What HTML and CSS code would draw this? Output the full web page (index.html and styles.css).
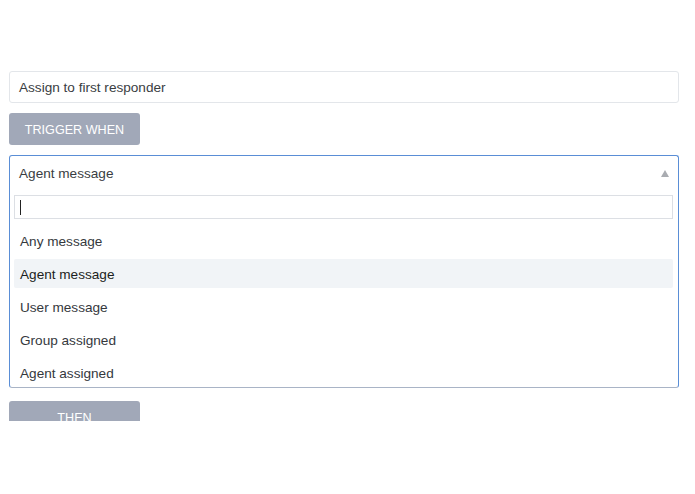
FILE: index.html
```html
<!DOCTYPE html>
<html>
<head>
<meta charset="utf-8">
<link rel="stylesheet" href="styles.css">
</head>
<body>
<div class="frame">
  <div class="text-input">Assign to first responder</div>
  <div class="btn">TRIGGER WHEN</div>
  <div class="select open">
    <div class="select-head">
      <span>Agent message</span>
      <span class="caret"></span>
    </div>
    <div class="search"><span class="cursor"></span></div>
    <ul class="options">
      <li>Any message</li>
      <li class="active">Agent message</li>
      <li>User message</li>
      <li>Group assigned</li>
      <li>Agent assigned</li>
    </ul>
  </div>
  <div class="btn then">THEN</div>
</div>
</body>
</html>
```

FILE: styles.css
```css
html, body {
  margin: 0;
  padding: 0;
  background: #ffffff;
}
body {
  font-family: "Liberation Sans", Arial, sans-serif;
  font-size: 13.6px;
  color: #3a3d42;
}
.frame {
  box-sizing: border-box;
  width: 695px;
  height: 421px;
  overflow: hidden;
  padding: 71px 16px 0 9px;
}
.text-input {
  box-sizing: border-box;
  width: 670px;
  height: 32px;
  border: 1px solid #e3e6ea;
  border-radius: 3px;
  padding: 0 9px;
  line-height: 31px;
  color: #3a3d42;
}
.btn {
  box-sizing: border-box;
  width: 131px;
  height: 32px;
  margin-top: 10px;
  background: #a1a8b8;
  border-radius: 3px;
  color: #ffffff;
  text-align: center;
  line-height: 34px;
  font-size: 12.6px;
}
.btn.then {
  margin-top: 13px;
}
.select {
  box-sizing: border-box;
  width: 670px;
  margin-top: 10px;
  border: 1px solid #5a8ed6;
  border-bottom-color: #a9b4c6;
  border-radius: 3px;
  background: #fff;
}
.select-head {
  display: flex;
  align-items: center;
  justify-content: space-between;
  height: 33px;
  padding: 1px 9px 0 9px;
  color: #3a3d42;
}
.caret {
  width: 0;
  height: 0;
  border-left: 4px solid transparent;
  border-right: 4px solid transparent;
  border-bottom: 7px solid #a9acb1;
  margin-top: 0;
}
.search {
  box-sizing: border-box;
  height: 24px;
  margin: 5px 5px 0 4px;
  border: 1px solid #dcdfe4;
  display: flex;
  align-items: center;
  padding-left: 5px;
}
.cursor {
  display: block;
  width: 1px;
  height: 15px;
  background: #222;
}
.options {
  list-style: none;
  margin: 0;
  padding: 3px 5px 0 4px;
}
.options li {
  box-sizing: border-box;
  height: 29px;
  line-height: 31px;
  margin-top: 4px;
  padding: 0 6px;
  border-radius: 2px;
  color: #35383d;
}
.options li.active {
  background: #f1f4f7;
  color: #1c1e21;
}
```
